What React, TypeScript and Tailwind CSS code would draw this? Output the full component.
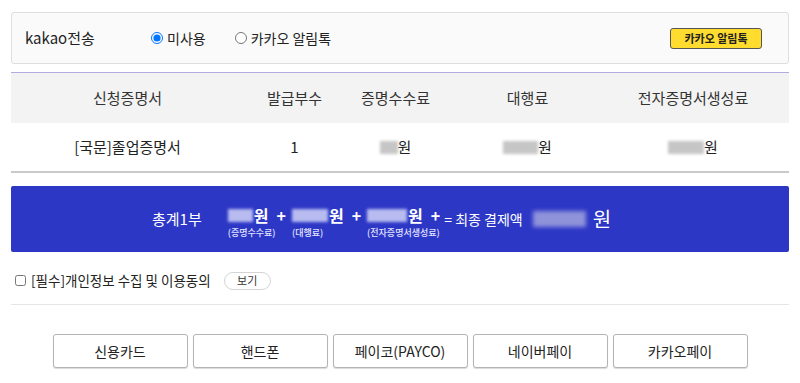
import React from "react";

const font = { fontFamily: '"Noto Sans CJK KR", "Noto Sans", sans-serif' };

function Masked({ w, light = false }: { w: number; light?: boolean }) {
  return (
    <span
      className={
        light
          ? "inline-block h-[13px] bg-[#b7bbef] blur-[1.5px]"
          : "inline-block h-[13px] bg-[#c6c6c6] blur-[1.5px]"
      }
      style={{ width: w }}
    />
  );
}

function FeePart({ blur, label, plus = true }: { blur: number; label: string; plus?: boolean }) {
  return (
    <div className="flex flex-col items-start">
      <div className="flex h-[20px] items-center text-[16px] font-bold leading-none text-white">
        <Masked w={blur} light />
        <span className="ml-[1px]">원</span>
        {plus ? <span className="ml-[8px]">+</span> : null}
      </div>
      <span className="mt-[3px] text-[9px] font-medium leading-none text-[#e2e4ff]">{label}</span>
    </div>
  );
}

const methods = ["신용카드", "핸드폰", "페이코(PAYCO)", "네이버페이", "카카오페이"];

export default function App() {
  return (
    <div className="min-h-[383px] w-[800px] bg-white px-[11px] text-[#222]" style={font}>
      {/* kakao 알림 */}
      <div className="mt-[12px] flex h-[52px] items-center rounded-[3px] border border-[#dedede] bg-[#fafafa] pl-[13px] pr-[26px]">
        <span className="w-[126px] text-[15px]">kakao전송</span>
        <label className="flex items-center gap-[4px] text-[14px]">
          <input type="radio" name="kakao" defaultChecked className="m-0 h-[12px] w-[12px]" />
          미사용
        </label>
        <label className="ml-[29px] flex items-center gap-[4px] text-[14px]">
          <input type="radio" name="kakao" className="m-0 h-[12px] w-[12px]" />
          카카오 알림톡
        </label>
        <button
          type="button"
          className="ml-auto h-[21px] w-[92px] rounded-[3px] border border-[#555] bg-[#ffdc2e] text-[11px] font-bold leading-none text-[#222]"
        >
          카카오 알림톡
        </button>
      </div>

      {/* 신청 내역 */}
      <div className="mt-[8px] border-t border-[#b3addf]">
        <div className="grid h-[50px] grid-cols-[233px_101px_101px_163px_1fr] items-center bg-[#f3f3f3] text-center text-[15px] text-[#333]">
          <span>신청증명서</span>
          <span>발급부수</span>
          <span>증명수수료</span>
          <span>대행료</span>
          <span className="pr-[12px]">전자증명서생성료</span>
        </div>
        <div className="grid h-[50px] grid-cols-[233px_101px_101px_163px_1fr] items-center border-b-2 border-[#c9c9c9] text-center text-[15px]">
          <span>[국문]졸업증명서</span>
          <span>1</span>
          <span className="flex items-center justify-center">
            <Masked w={18} />
            <span>원</span>
          </span>
          <span className="flex items-center justify-center">
            <Masked w={35} />
            <span>원</span>
          </span>
          <span className="flex items-center justify-center pr-[12px]">
            <Masked w={36} />
            <span>원</span>
          </span>
        </div>
      </div>

      {/* 총계 */}
      <div className="mt-[13px] flex h-[66px] items-center rounded-[2px] bg-[#2d37c6] pl-[141px] text-white">
        <span className="text-[15px]">총계1부</span>
        <div className="ml-[26px] flex items-start gap-[6px] pt-[4px]">
          <FeePart blur={25} label="(증명수수료)" />
          <FeePart blur={36} label="(대행료)" />
          <FeePart blur={40} label="(전자증명서생성료)" />
        </div>
        <span className="ml-[4px] text-[14px]">= 최종 결제액</span>
        <span className="ml-[10px] inline-block h-[16px] w-[53px] bg-[#8f93d9] blur-[2px]" />
        <span className="ml-[7px] text-[20px] leading-none">원</span>
      </div>

      {/* 동의 */}
      <div className="mt-[18px] flex h-[21px] items-center pl-[4px]">
        <input type="checkbox" className="m-0 h-[11px] w-[11px]" />
        <span className="ml-[5px] text-[13.5px]">[필수]개인정보 수집 및 이용동의</span>
        <button
          type="button"
          className="ml-[13px] h-[18px] w-[47px] rounded-full border border-[#d4d4d4] bg-white text-[11px] leading-none text-[#333]"
        >
          보기
        </button>
      </div>
      <div className="mt-[13px] border-t border-[#e6e6e6]" />

      {/* 결제수단 */}
      <div className="mt-[29px] flex justify-center gap-[5px]">
        {methods.map((m) => (
          <button
            key={m}
            type="button"
            className="h-[34px] w-[135px] rounded-[3px] border border-[#b4b4b4] bg-white text-[14px] text-[#222] shadow-[0_1px_1px_rgba(0,0,0,.15)]"
          >
            {m}
          </button>
        ))}
      </div>
    </div>
  );
}
